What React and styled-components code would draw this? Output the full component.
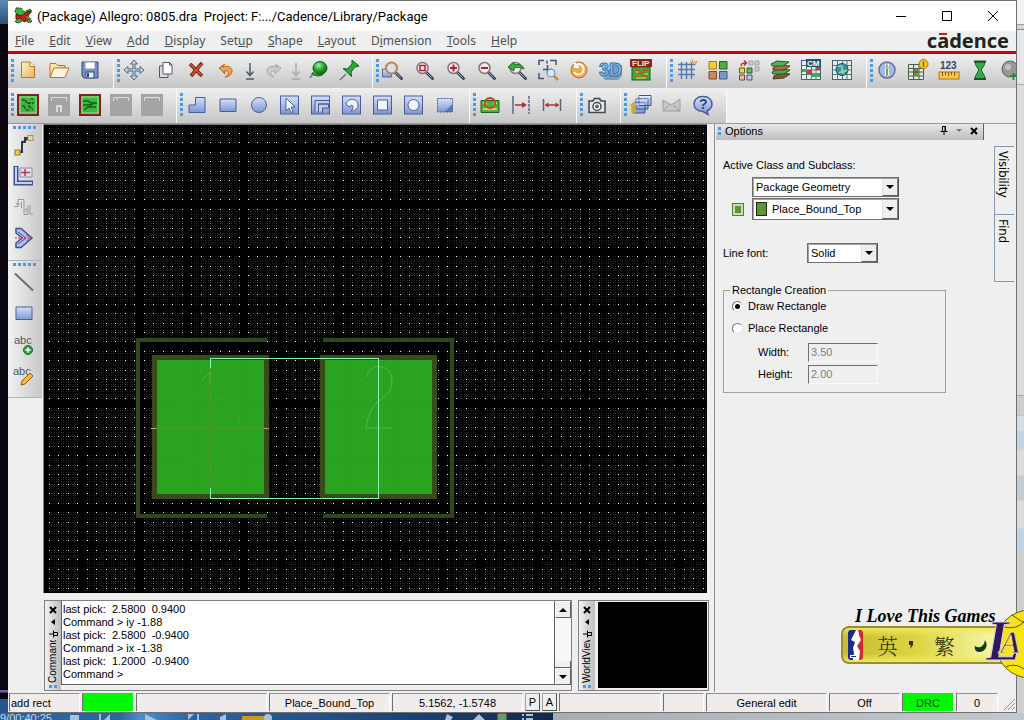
import { useState } from "react";
import styled, { createGlobalStyle } from "styled-components";

const GlobalStyle = createGlobalStyle`
    * {
        box-sizing: border-box;
    }
    body {
        margin: 0;
        font-family: "Liberation Sans", Arial, sans-serif;
        font-size: 11px;
        color: #000;
    }
    button, input, select {
        font: inherit;
        color: inherit;
    }
`;

const Desktop = styled.div`
    position: relative;
    display: grid;
    grid-template-columns: 8px 1fr 7px;
    grid-template-rows: 1fr 7px;
    height: 100vh;
    overflow: hidden;
    background: #0b0410;
`;

const LeftStrip = styled.div`
    background: linear-gradient(#5b8db8 0, #2c5078 24px, #0a0610 24px, #0a0610 690px, #6a5fae 690px, #6a5fae 692px, #0a0610 693px, #0a0610 699px, #27558f 699px);
`;

const RightStrip = styled.div`
    background: linear-gradient(#f2f2f2 0, #f2f2f2 24px, #9c9c9c 24px, #9c9c9c 25px, #d6d6d6 25px, #d6d6d6 29px, #888 29px, #888 30px, #e4e6ea 30px, #e4e6ea 84px, #aaa 84px, #aaa 85px, #dcdcdc 85px, #dcdcdc 395px, #aaa 395px, #aaa 396px, #cdcdcd 396px, #cdcdcd 415px, #aaa 415px, #d8dde2 416px, #d8dde2 430px, #c4d4e4 431px, #c4d4e4 450px, #dcdcdc 451px, #dcdcdc 475px, #c0ccd8 476px, #c0ccd8 500px, #dcdcdc 501px, #dcdcdc 528px, #c0d4e4 529px, #c0d4e4 553px, #d0d0d0 555px);
`;

const Player = styled.div`
    grid-column: 1 / -1;
    display: flex;
    align-items: flex-start;
    gap: 18px;
    overflow: hidden;
    line-height: 11px;
    color: #c8d8ea;
    background: linear-gradient(90deg, #2d64a0 0, #2d64a0 120px, #4a8ed0 140px, #2d64a0 190px, #1c4478 400px, #14284a 553px, #a8adb3 553px, #c3c8ce 100%);
`;

const Window = styled.div`
    display: flex;
    flex-direction: column;
    min-width: 0;
    min-height: 0;
    background: #efefef;
    border-top: 1px solid #707070;
    border-right: 1px solid #707070;
    border-bottom: 1px solid #707070;
`;

const TitleBar = styled.header`
    display: flex;
    align-items: center;
    height: 30px;
    padding-left: 6px;
    background: #fff;
`;

const TitleText = styled.h1`
    flex: 1;
    margin: 0 0 0 4px;
    font-family: Roboto, "Noto Sans", sans-serif;
    font-size: 13px;
    font-weight: 400;
    white-space: pre;
`;

const CaptionButton = styled.button`
    display: grid;
    place-items: center;
    width: 46px;
    height: 30px;
    padding: 0;
    border: none;
    background: none;
`;

const MenuRow = styled.div`
    display: flex;
    align-items: center;
    justify-content: space-between;
    height: 23px;
    padding: 0 7px 1px 0;
    border-bottom: 3px solid #c8040c;
`;

const MenuBar = styled.nav`
    display: flex;
    font-family: "Noto Sans", "Open Sans", sans-serif;
    font-size: 12px;
    color: #505050;
`;

const MenuButton = styled.button`
    padding: 0 8px 0 7px;
    border: none;
    background: none;
    line-height: 18px;
`;

const Brand = styled.div`
    position: relative;
    font-family: "Noto Sans", "Open Sans", sans-serif;
    font-size: 20px;
    font-weight: 700;
    line-height: 20px;
    color: #222;
    &::before {
        content: "";
        position: absolute;
        left: 12px;
        top: 2px;
        width: 8px;
        height: 2px;
        background: #d8141c;
    }
`;

const Toolbar = styled.div`
    display: flex;
    flex: none;
    align-self: ${(p) => (p.$fit ? "flex-start" : "stretch")};
    height: ${(p) => (p.$fit ? 35 : 34)}px;
    overflow: hidden;
    background: linear-gradient(#f0f0f0, #c6c6c6);
`;

const ToolGroup = styled.div`
    display: flex;
    flex: none;
    align-items: center;
    gap: 9px;
    padding: 0 ${(p) => p.$end || 12}px 2px 3px;
    border-right: 1px solid #fafafa;
`;

const Grip = styled.span`
    flex: none;
    width: 3px;
    height: 23px;
    margin-right: -6px;
    background: repeating-linear-gradient(#4c9ae6 0 3px, transparent 3px 5px);
`;

const ToolButton = styled.button`
    display: grid;
    place-items: center;
    flex: none;
    width: 22px;
    height: 22px;
    margin: 0 ${(p) => (p.$slim ? -8 : 0)}px;
    padding: 0;
    border: none;
    background: none;
    svg {
        display: block;
    }
`;

const Main = styled.div`
    display: flex;
    flex: 1;
    min-height: 0;
    border-top: 1px solid #9a9a9a;
`;

const SideTools = styled.div`
    display: flex;
    flex-direction: column;
    flex: none;
    width: 34px;
`;

const SideGroup = styled.div`
    display: flex;
    flex-direction: column;
    align-items: center;
    gap: 9px;
    padding: 2px 2px 11px 0;
    border-bottom: 1px solid #aeb4bc;
    background: linear-gradient(90deg, #f2f2f2, #c8c8c8);
`;

const SideGrip = styled.span`
    width: 23px;
    height: 3px;
    margin-bottom: -4px;
    background: repeating-linear-gradient(90deg, #4c9ae6 0 3px, transparent 3px 5px);
`;

const Center = styled.div`
    display: flex;
    flex-direction: column;
    flex: 1;
    gap: 7px;
    min-width: 0;
    padding: 0 5px 1px 1px;
`;

const DesignCanvas = styled.div`
    flex: 1;
    min-height: 0;
    margin-right: 2px;
    overflow: hidden;
    border-left: 1px solid #808080;
    border-top: 1px solid #808080;
    background: #000;
    svg {
        display: block;
        width: 100%;
        height: 100%;
    }
`;

const BottomDocks = styled.div`
    display: flex;
    flex: none;
    gap: 6px;
    height: 91px;
    padding-left: 1px;
`;

const Dock = styled.section`
    display: flex;
    flex: ${(p) => (p.$grow ? "1" : "none")};
    width: ${(p) => (p.$grow ? "auto" : "131px")};
    min-width: 0;
    border: 1px solid #808080;
`;

const DockBar = styled.div`
    display: flex;
    flex-direction: column;
    align-items: center;
    flex: none;
    width: 16px;
    padding-top: 3px;
    background: linear-gradient(90deg, #f2f2f2, #bdbdbd);
`;

const DockTitle = styled.h2`
    flex: 1;
    min-height: 0;
    margin: 0;
    overflow: hidden;
    writing-mode: vertical-rl;
    transform: rotate(180deg);
    font-size: 10px;
    font-weight: 400;
    line-height: 12px;
`;

const DockGrip = styled.span`
    flex: none;
    width: 8px;
    height: 3px;
    margin: 2px 0;
    background: repeating-linear-gradient(90deg, #4c9ae6 0 3px, transparent 3px 5px);
`;

const CommandLog = styled.div`
    flex: 1;
    margin-bottom: 5px;
    padding: 2px 1px;
    border-left: 1px solid #606060;
    border-bottom: 1px solid #606060;
    background: #fff;
    line-height: 13px;
    white-space: pre;
`;

const Scrollbar = styled.div`
    display: flex;
    flex-direction: column;
    justify-content: space-between;
    flex: none;
    width: 17px;
    margin-bottom: 5px;
    border-left: 1px solid #606060;
    background: #f8f8f8;
`;

const ScrollButton = styled.button`
    display: grid;
    place-items: center;
    height: 17px;
    padding: 0;
    border: 1px solid #fff;
    border-right-color: #606060;
    border-bottom-color: #606060;
    background: #efefef;
`;

const ScrollThumb = styled.div`
    height: 7px;
    margin-top: auto;
    border-right: 1px solid #606060;
    border-bottom: 1px solid #606060;
    background: #efefef;
`;

const WorldView = styled.div`
    flex: 1;
    margin: 1px 1px 2px 3px;
    background: #000;
`;

const OptionsPane = styled.aside`
    display: flex;
    flex: none;
    width: 302px;
    border-left: 1px solid #909090;
`;

const OptionsColumn = styled.div`
    flex: none;
    width: 269px;
    padding-left: 1px;
`;

const OptionsHeader = styled.div`
    display: flex;
    align-items: center;
    gap: 4px;
    height: 16px;
    padding: 0 4px 3px 2px;
    border-right: 1px solid #606060;
    background: linear-gradient(#e8e8e8, #bcbcbc);
    h2 {
        flex: 1;
        margin: 0;
        font-size: 11px;
        font-weight: 400;
    }
`;

const HeaderGrip = styled.span`
    width: 3px;
    height: 8px;
    background: repeating-linear-gradient(#4c9ae6 0 3px, transparent 3px 5px);
`;

const TinyButton = styled.button`
    display: grid;
    place-items: center;
    width: 11px;
    height: 12px;
    padding: 0;
    border: none;
    background: none;
`;

const OptionsForm = styled.form`
    padding: 18px 0 0 7px;
`;

const ClassGrid = styled.div`
    display: grid;
    grid-template-columns: 29px 147px;
    gap: 1px 0;
    align-items: center;
    justify-items: center;
    margin-bottom: 23px;
`;

const WideLabel = styled.label`
    grid-column: 1 / -1;
    justify-self: start;
    line-height: 14px;
    margin-bottom: 4px;
`;

const LayerToggle = styled.button`
    grid-column: 1;
    width: 12px;
    height: 13px;
    padding: 0;
    border: 1px solid #4f7f2f;
    background: #5e9434;
    box-shadow: inset 0 0 0 2px #c9dcba;
`;

const SelectFrame = styled.div`
    position: relative;
    display: flex;
    align-items: center;
    grid-column: 2;
    width: ${(p) => p.$width || 147}px;
    height: ${(p) => (p.$tall ? 22 : 20)}px;
    padding-left: ${(p) => (p.$tall ? 3 : 0)}px;
    border: 1px solid #707070;
    border-right-color: #505050;
    background: #fff;
    box-shadow: inset 1px 1px 0 #a0a0a0;
`;

const Select = styled.select`
    flex: 1;
    min-width: 0;
    height: 100%;
    padding: 0 18px 0 3px;
    border: none;
    outline: none;
    appearance: none;
    background: none;
`;

const SelectArrow = styled.span`
    position: absolute;
    right: 0;
    top: 1px;
    bottom: 0;
    display: grid;
    place-items: center;
    width: 16px;
    border-right: 1px solid #808080;
    border-bottom: 1px solid #606060;
    border-left: 1px solid #e0e0e0;
    background: #efefef;
    pointer-events: none;
`;

const Swatch = styled.span`
    width: 11px;
    height: 14px;
    margin-right: 2px;
    border: 1px solid #1c2c10;
    background: #5e9434;
`;

const LineFontRow = styled.div`
    display: flex;
    align-items: center;
    margin-bottom: 20px;
    label {
        width: 84px;
    }
`;

const RectangleSet = styled.fieldset`
    display: flex;
    flex-direction: column;
    width: 223px;
    height: 110px;
    margin: 0;
    padding: 0 0 0 8px;
    border: 1px solid #a0a0a0;
    legend {
        margin-left: -2px;
        padding: 0 2px;
        line-height: 14px;
    }
`;

const RadioLabel = styled.label`
    display: flex;
    align-items: center;
    gap: 5px;
    height: 18px;
    margin-bottom: 4px;
`;

const Radio = styled.input`
    appearance: none;
    width: 11px;
    height: 11px;
    margin: 0;
    border: 1px solid #707070;
    border-right-color: #e4e4e4;
    border-bottom-color: #e4e4e4;
    border-radius: 50%;
    background: #fff;
    &:checked {
        background: radial-gradient(#000 0 2px, #fff 3px);
    }
`;

const SizeRow = styled.div`
    display: flex;
    align-items: center;
    height: 22px;
    padding-left: 26px;
    label {
        width: 50px;
    }
`;

const SizeInput = styled.input`
    width: 70px;
    height: 19px;
    padding: 0 0 0 2px;
    border: 1px solid #fafafa;
    border-top-color: #707070;
    border-left-color: #707070;
    background: #efefef;
    &:disabled {
        color: #808080;
    }
`;

const DockTabs = styled.div`
    display: flex;
    flex-direction: column;
    flex: 1;
    margin: 22px 2px 0 10px;
`;

const DockTab = styled.button`
    width: 20px;
    height: 68px;
    padding: 4px 3px 0 0;
    border: none;
    border-top: 1px solid #8898a8;
    border-left: 1px solid #8898a8;
    background: #efefef;
    writing-mode: vertical-rl;
    text-align: left;
    font-family: "Noto Sans", "Open Sans", sans-serif;
    font-size: 12px;
    line-height: 16px;
    &:last-child {
        border-bottom: 1px solid #8898a8;
    }
`;

const StatusBar = styled.footer`
    display: flex;
    flex: none;
    gap: 2px;
    height: 20px;
    padding: 1px 0 1px 1px;
`;

const StatusCell = styled.div`
    flex: ${(p) => (p.$width ? `0 0 ${p.$width}px` : "1")};
    border-left: 1px solid #707070;
    border-top: 1px solid #909090;
    border-right: 1px solid #fff;
    padding: 0 1px;
    line-height: 18px;
    text-align: ${(p) => (p.$left ? "left" : "center")};
    color: ${(p) => (p.$on ? "#0a4a0a" : "#000")};
    background: ${(p) => (p.$on ? "#00f800" : "#f0eceb")};
`;

const StatusButton = styled.button`
    flex: 0 0 15px;
    padding: 0;
    border: 1px solid #505050;
    border-top-color: #a0a0a0;
    border-left-color: #a0a0a0;
    background: #efefef;
`;

const ImeWidget = styled.div`
    position: absolute;
    right: 0;
    bottom: 42px;
    width: 183px;
    height: 71px;
    overflow: hidden;
`;

const ImeSlogan = styled.div`
    padding-left: 14px;
    font-family: "Liberation Serif", serif;
    font-size: 18px;
    font-style: italic;
    font-weight: 700;
    line-height: 19px;
    white-space: nowrap;
`;

const ImeBar = styled.div`
    display: flex;
    align-items: center;
    height: 38px;
    padding-left: 5px;
    border: 2px solid #98902c;
    border-right: none;
    border-radius: 8px 0 0 8px;
    background: linear-gradient(#f0e860 0, transparent 25%, transparent 75%, #f0e860), linear-gradient(90deg, #c8bc34, #dcd440 40%, #f4f4a0 80%);
    font-family: "Noto Serif CJK TC", "Noto Sans CJK TC", sans-serif;
    font-size: 21px;
    font-weight: 300;
    line-height: 30px;
    color: #2c3008;
`;

const ImeKey = styled.span`
    margin-left: ${(p) => p.$gap}px;
`;

const ImeBall = styled.svg`
    position: absolute;
    right: 0;
    top: 0;
`;

const Svg = ({ children }) => (
    <svg width="22" height="22" viewBox="0 0 22 22" fill="none" stroke="#44546c" strokeWidth="1">
        {children}
    </svg>
);

const Gradients = () => (
    <svg width="0" height="0" style={{ position: "absolute" }} aria-hidden="true">
        <defs>
            <linearGradient id="blue" x1="0" y1="0" x2="0" y2="1">
                <stop offset="0" stopColor="#d4e0fa" />
                <stop offset="1" stopColor="#7d97d4" />
            </linearGradient>
            <linearGradient id="tan" x1="0" y1="0" x2="1" y2="1">
                <stop offset="0" stopColor="#fff0cc" />
                <stop offset="1" stopColor="#e8b660" />
            </linearGradient>
            <radialGradient id="ball" cx="0.4" cy="0.3" r="0.7">
                <stop offset="0" stopColor="#a0f0a0" />
                <stop offset="0.5" stopColor="#28a838" />
                <stop offset="1" stopColor="#086018" />
            </radialGradient>
        </defs>
    </svg>
);

const Lens = ({ children, back }) => (
    <Svg>
        {back}
        <path d="M13.500 13.500l6 6" stroke="#3c4668" strokeWidth="3" strokeLinecap="round" />
        <path d="M13.500 13.500l5 5" stroke="#98a4c8" />
        <circle cx="9.500" cy="9" r="5.500" fill="#f6ecec" stroke="#8c7078" strokeWidth="1.500" />
        {children}
    </Svg>
);

const DownArrow = ({ color }) => (
    <Svg>
        <path d="M11 4v12M7.500 12.500l3.500 4 3.500-4M7 20h8" stroke={color} strokeWidth="1.500" />
    </Svg>
);

const Board = ({ children }) => (
    <Svg>
        <rect x="1" y="1" width="20" height="20" fill="#3cb83c" stroke="#7c2428" strokeWidth="2" />
        <rect x="3" y="3" width="16" height="16" stroke="#b8d0a0" />
        {children}
    </Svg>
);

const GrayBoard = ({ children }) => (
    <Svg>
        <rect x="0" y="0" width="22" height="22" fill="#a4a4a4" stroke="none" />
        <path d="M3.500 7v-3.500h15v3.500" stroke="#dedede" />
        {children}
    </Svg>
);

const Tile = ({ children }) => (
    <Svg>
        <rect x="1.500" y="2" width="18" height="18" fill="url(#blue)" stroke="#4c5c94" />
        {children}
    </Svg>
);

const Table = ({ children }) => (
    <Svg>
        <rect x="1.500" y="1.500" width="19" height="19" fill="#e8ecec" stroke="#486070" />
        <path d="M1.500 6.500h19M1.500 11h19M1.500 15.500h19M6.500 1.500v19M11.500 1.500v19M16 1.500v19" stroke="#587080" />
        {children}
    </Svg>
);

const icons = {
    new: (
        <Svg>
            <path d="M4.500 3h8.500l4.500 4v11.500h-13z" fill="url(#tan)" stroke="#b07c2c" />
            <path d="M13 3v4.500h4.500" fill="#fff" stroke="#b07c2c" />
        </Svg>
    ),
    open: (
        <Svg>
            <path d="M2 18V4.500h6l2 2h7V9" fill="url(#tan)" stroke="#b47820" />
            <path d="M2 18.500L6 9h15l-4 9.500z" fill="#fff4e0" stroke="#b47820" />
        </Svg>
    ),
    save: (
        <Svg>
            <path d="M3 3h16v16H5l-2-2z" fill="#7890c0" stroke="#34487c" />
            <path d="M6 3h10v7H6z" fill="#fff" stroke="#8898b8" />
            <path d="M7 13h8v6H7z" fill="#e4ecf8" stroke="#34487c" />
            <path d="M8 14h2v4H8z" fill="#34487c" stroke="none" />
        </Svg>
    ),
    move: (
        <Svg>
            <path d="M11 3v16M3 11h16" stroke="#4c6480" strokeWidth="3" />
            <path d="M11 1L7.500 5h7zM11 21l-3.500-4h7zM1 11l4-3.500v7zM21 11l-4-3.500v7z" fill="#c8dcec" stroke="#4c6480" />
            <path d="M11 4v14M4 11h14" stroke="#d4e4f0" strokeWidth="1" />
        </Svg>
    ),
    copy: (
        <Svg>
            <path d="M5.500 7h8.500v11.500H5.500z" fill="#d8dcdf" stroke="#505860" />
            <path d="M9 3.500h6.500l2.500 2.500v9H9z" fill="#fff" stroke="#505860" />
            <path d="M15.500 3.500V6H18" stroke="#505860" />
        </Svg>
    ),
    remove: (
        <Svg>
            <path d="M5 5l12 12M17 4L6 17" stroke="#702010" strokeWidth="3.500" />
            <path d="M5.500 5.500l11 11M16.500 5L6.500 16.500" stroke="#e0582c" strokeWidth="1.500" />
        </Svg>
    ),
    undo: (
        <Svg>
            <path d="M6 8c6-2 10 0 10 4s-4 6-7 6c4-2 6-7-1-6l1 3-6-6 6-4z" fill="#f0a050" stroke="#b86420" />
        </Svg>
    ),
    down: <DownArrow color="#4c5c6c" />,
    redo: (
        <Svg>
            <path d="M16 8C10 6 5 8 5 12s4 6 7 6c-4-2-5-7 1-6v3l6-6-6-4z" fill="#ccc" stroke="#a8a8a8" />
        </Svg>
    ),
    downOff: <DownArrow color="#acacac" />,
    tack: (
        <Svg>
            <path d="M6 13l-4 6" stroke="#888" strokeWidth="2" />
            <ellipse cx="12" cy="9" rx="7" ry="6.500" fill="url(#ball)" stroke="#105c1c" />
            <path d="M4 14c3 3 8 3 11 1" stroke="#187828" strokeWidth="2" />
        </Svg>
    ),
    pushpin: (
        <Svg>
            <path d="M7 15l-6 6" stroke="#707070" strokeWidth="1.500" />
            <path d="M13 1l7 6-4 1-4 5 .5 4.500-8.500-8 4.500 .5L13 5z" fill="#30a840" stroke="#106020" />
        </Svg>
    ),
    zoomWindow: (
        <Lens back={<path d="M0.500 10h9v8h-9z" fill="url(#blue)" stroke="#4c64a0" />}>
            <circle cx="9.500" cy="9" r="5.500" fill="#d8e0ec" stroke="#c08850" strokeWidth="2" />
        </Lens>
    ),
    zoomFit: <Lens><path d="M7 6.500h5v5H7z" stroke="#b01c30" strokeWidth="1.500" /></Lens>,
    zoomIn: <Lens><path d="M6 9h7M9.500 5.500v7" stroke="#b01c30" strokeWidth="2" /></Lens>,
    zoomOut: <Lens><path d="M6 9h7" stroke="#b01c30" strokeWidth="2" /></Lens>,
    zoomBack: <Lens><path d="M2 8l6-5v3c6-2 9 1 10 4-3-2-6-2-10-1v3z" fill="#38b048" stroke="#107028" /></Lens>,
    zoomArea: (
        <Svg>
            <path d="M2 6V1.500h5M13 1.500h6V6M2 14v5.500h5M10 1.500v3M6 10.500h9M10.500 6v9" stroke="#405874" strokeWidth="1.500" />
            <circle cx="14" cy="14" r="4" fill="#d0ecfa" stroke="#6890b0" />
            <path d="M17 17l4 4" stroke="#d48830" strokeWidth="2.500" />
        </Svg>
    ),
    redraw: (
        <Svg>
            <circle cx="11" cy="11" r="8" fill="#f8a848" stroke="#b87030" />
            <path d="M7 7c4-4 9-1 8.500 4s-7 6-9.500 2M7 4v4h4" stroke="#fff" strokeWidth="2" />
        </Svg>
    ),
    view3d: (
        <svg width="24" height="22" viewBox="0 0 24 22">
            <path d="M2 15l4 6h13l4-4V7l-3-3z" fill="#7c9cc0" />
            <text x="0" y="17" fontFamily="Liberation Sans" fontSize="18" fontWeight="700" fill="#90c4f0" stroke="#3870a8">3D</text>
        </svg>
    ),
    flip: (
        <Svg>
            <rect x="2" y="8" width="18" height="13" fill="#3cac34" stroke="#185c1c" />
            <path d="M5 11h4v3h5v-3h4M5 18h4M12 17h5" stroke="#e04030" strokeWidth="1.500" />
            <path d="M6 19h10M6 13h3M14 15h4" stroke="#f0d858" />
            <rect x="0" y="0" width="22" height="8" fill="#882418" stroke="none" />
            <text x="2" y="7" fontFamily="Liberation Sans" fontSize="8" fontWeight="700" fill="#ffe8c0" stroke="none">FLIP</text>
        </Svg>
    ),
    grid: (
        <Svg>
            <path d="M2 5.500h17M2 10.500h17M2 15.500h17M5.500 3v17M10.500 3v17M15.500 3v17" stroke="#5878b0" strokeWidth="1.500" />
            <path d="M16 0l1 4 4-2-2 4M14 2l3 3" stroke="#e8902c" />
        </Svg>
    ),
    tiles: (
        <Svg>
            <path d="M2 2.500h7.500v7.500H2z" fill="#f4cc38" stroke="#a07c10" />
            <path d="M12.500 2.500H20v7.500h-7.500z" fill="#58a848" stroke="#286420" />
            <path d="M2 12.500h7.500V20H2z" fill="#c88868" stroke="#84482c" />
            <path d="M12.500 12.500H20V20h-7.500z" fill="#7898c8" stroke="#3c5888" />
        </Svg>
    ),
    tilesAdd: (
        <Svg>
            <path d="M11 2h4v4h-4zM17 2h4v4h-4zM17 8h4v4h-4z" fill="#ccc" stroke="#a0a0a0" />
            <path d="M1.500 9h5v5h-5z" fill="#e8d850" stroke="#586018" />
            <path d="M9 9h5v5H9z" fill="#68b858" stroke="#286420" />
            <path d="M1.500 16h5v5h-5z" fill="#e8c0b0" stroke="#84383c" />
            <path d="M9 16h5v5H9z" fill="#b8c8e8" stroke="#3c5888" />
            <path d="M3 7c0-3 2-3 5-3M6 1.500L8.500 4 6 6.500" stroke="#c03038" strokeWidth="1.500" />
        </Svg>
    ),
    layers: (
        <Svg>
            <path d="M5 17l6-3 10 1-6 4-11 1z" fill="#7c5838" stroke="#503820" />
            <path d="M3 13l6-3 12 1-6 4H4z" fill="#50a848" stroke="#285c24" />
            <path d="M4 9l6-3 11 1-6 4H4z" fill="#a87048" stroke="#583420" />
            <path d="M2 5l6-3 12 1-6 4H3z" fill="#58b050" stroke="#285c24" />
        </Svg>
    ),
    cm: (
        <Table>
            <path d="M2 10h5v3H2zM12 14h8v4h-8z" fill="#40a850" stroke="none" />
            <path d="M7 11h4v4H7zM16 8h4v3h-4z" fill="#d03830" stroke="none" />
            <rect x="6" y="0" width="15" height="8" fill="#205870" stroke="none" />
            <text x="7" y="7" fontFamily="Liberation Sans" fontSize="8" fontWeight="700" fill="#fff" stroke="none">CM</text>
        </Table>
    ),
    globe: (
        <Table>
            <circle cx="11" cy="10.500" r="6" fill="#3890a0" stroke="#185060" />
            <path d="M7 8c3-3 5 0 4 2s3 3 5 1M8 14c2-2 4-1 5 1" stroke="#a0e0a0" strokeWidth="1.500" />
        </Table>
    ),
    info: (
        <Svg>
            <circle cx="11" cy="11" r="8" fill="#a8b8e4" stroke="#60709c" strokeWidth="1.500" />
            <path d="M11 9.500v7M11 5v2.500" stroke="#fff" strokeWidth="4" />
            <path d="M11 9.500v7M11 5.500v2" stroke="#68a840" strokeWidth="2" />
        </Svg>
    ),
    report: (
        <Svg>
            <path d="M1.500 5.500h15v15h-15zM1.500 9.500h15M1.500 13h15M1.500 17h15M6.500 5.500v15M12 5.500v15" fill="#e4e8d8" stroke="#486050" />
            <path d="M7 10h4.500v7H7z" fill="#48a848" stroke="none" />
            <path d="M7 12h4v2H7z" fill="#d03030" stroke="none" />
            <circle cx="16.500" cy="5" r="4.500" fill="#f8c828" stroke="#a07408" />
            <path d="M16.500 2.500v5" stroke="#7c4c08" strokeWidth="1.500" />
        </Svg>
    ),
    ruler: (
        <Svg>
            <text x="2" y="10" fontFamily="Liberation Sans" fontSize="10" fontWeight="700" fill="#304868" stroke="none">123</text>
            <rect x="1" y="13" width="20" height="7" fill="#f8c850" stroke="#b07410" />
            <path d="M4.500 13v4M7.500 13v3M10.500 13v4M13.500 13v3M16.500 13v4" stroke="#8c5808" />
        </Svg>
    ),
    hourglass: (
        <Svg>
            <path d="M6 3h10c0 4-3.500 6-3.500 8s3.500 5 3.500 8.500H6c0-3.500 3.500-6.500 3.500-8.500S6 7 6 3z" fill="#38a848" stroke="#105c20" />
            <path d="M5 2.500h12M5 20h12" stroke="#105c20" strokeWidth="2" />
        </Svg>
    ),
    gray: (
        <Svg>
            <circle cx="10" cy="10" r="8" fill="#989898" stroke="#606060" />
            <circle cx="8" cy="8" r="3" fill="#c4c4c4" stroke="none" />
            <path d="M10 17h7M13.500 14v7" stroke="#289038" strokeWidth="2" />
        </Svg>
    ),
    boardA: <Board><path d="M5 6h4v3h3v4M14 5h2M5 12h3v3M12 12l4 4M11 9h6M9 16h3" stroke="#145c18" strokeWidth="1.500" strokeDasharray="3 1" /></Board>,
    grayA: <GrayBoard><path d="M9 18v-6h4v6" stroke="#eee" strokeWidth="1.500" /></GrayBoard>,
    boardB: <Board><path d="M4 7h5l3 2h6M4 11h8l3-2M5 16l4-3h8" stroke="#145c18" strokeWidth="1.500" /></Board>,
    grayB: <GrayBoard><path d="M5 3l3 3" stroke="#dedede" /></GrayBoard>,
    grayC: <GrayBoard />,
    polygon: <Svg><path d="M9.500 3.500H19v15H3v-7.500h6.500z" fill="url(#blue)" stroke="#4c5c94" /></Svg>,
    rect: <Svg><path d="M3 5h16v12.500H3z" fill="url(#blue)" stroke="#4c5c94" /></Svg>,
    circle: <Svg><circle cx="11" cy="11" r="7.500" fill="url(#blue)" stroke="#4c5c94" /></Svg>,
    select: <Tile><path d="M7 4v13l3-3 2 4.500 2-1-2-4.500h4z" fill="#fff" stroke="#4c5c94" /></Tile>,
    nested: <Tile><path d="M5 19V6.500h14M8.500 19v-9H19M8.500 10h10v4h-6v5.500" fill="#c0ccec" stroke="#4c5c94" /></Tile>,
    arcCut: <Tile><path d="M5 10c1-6 12-7 12 1 0 4-4 6-7 6 2-2 3-4 1-6L8 13z" fill="#f4f6fc" stroke="#4c5c94" /></Tile>,
    rectCut: <Tile><path d="M5.500 6h10v10h-10z" fill="#f4f6fc" stroke="#4c5c94" /></Tile>,
    circleCut: <Tile><circle cx="10.500" cy="11" r="5.500" fill="#f4f6fc" stroke="#4c5c94" /></Tile>,
    island: (
        <Svg>
            <path d="M3.500 5h15v8l-5 5h-10z" fill="url(#blue)" stroke="none" />
            <path d="M18.500 10v8h-8z" fill="#5874b8" stroke="none" />
            <path d="M3.500 4.500h15v13.500h-15z" stroke="#4c5c94" strokeDasharray="2 1" />
        </Svg>
    ),
    boardRing: (
        <Svg>
            <path d="M2 6.500h18v12H2z" fill="#48b040" stroke="#186420" />
            <path d="M4 9h3v3M18 9h-3v4M4 15h14" stroke="#f0e060" strokeWidth="1.500" />
            <circle cx="11" cy="9" r="5" stroke="#d03c28" strokeWidth="2" />
        </Svg>
    ),
    toEdge: (
        <Svg>
            <path d="M3 2v18" stroke="#586878" strokeWidth="1.500" />
            <path d="M19 2v18" stroke="#586878" strokeWidth="1.500" strokeDasharray="3 1" />
            <path d="M5 11h9" stroke="#b03038" strokeWidth="1.500" />
            <path d="M12 8l5 3-5 3z" fill="#b03038" stroke="none" />
        </Svg>
    ),
    between: (
        <Svg>
            <path d="M2.500 5v12M19.500 5v12" stroke="#586878" strokeWidth="1.500" />
            <path d="M6 11h10" stroke="#b03038" strokeWidth="1.500" />
            <path d="M3.500 11l4-2.500v5zM18.500 11l-4-2.500v5z" fill="#b03038" stroke="none" />
        </Svg>
    ),
    camera: (
        <Svg>
            <path d="M3 7h4l1.500-2.500h5L15 7h4v11.500H3z" fill="#e4e6ea" stroke="#404850" strokeWidth="1.500" />
            <circle cx="11" cy="12.500" r="4" fill="#fff" stroke="#404850" strokeWidth="1.500" />
            <circle cx="11" cy="12.500" r="1.500" fill="#607090" />
        </Svg>
    ),
    windows: (
        <Svg>
            <path d="M9 1.500h12v10H9zM6 5h12v10H6zM3 9h12v10H3z" fill="url(#blue)" stroke="#3c5490" />
            <path d="M9 2.500h12M6 6h12M3 10h12" stroke="#e8f0ff" />
            <path d="M0 11h5v1.500H2v2h3v1.500H2v2h4" stroke="#d4b020" strokeWidth="1.500" />
        </Svg>
    ),
    mail: (
        <Svg>
            <path d="M2 6l8 5 9-6v12H2zM2 17l6-6M19 17l-7-6" fill="#c8c8c8" stroke="#9c9c9c" />
        </Svg>
    ),
    help: (
        <Svg>
            <path d="M11 2.500c6 0 9 3.500 9 7.500s-3 6-5 7l1 3.500-5-3C5 17.500 2 14 2 10s3-7.500 9-7.500z" fill="url(#blue)" stroke="#4c5c94" strokeWidth="1.500" />
            <text x="7" y="15" fontFamily="Liberation Sans" fontSize="14" fontWeight="700" fill="#304478" stroke="none">?</text>
        </Svg>
    ),
    connect: (
        <Svg>
            <path d="M4 18h5V8h3V4h5" stroke="#303848" strokeWidth="2" />
            <path d="M11 7l5-3" stroke="#303848" strokeWidth="2" />
            <rect x="2" y="16" width="5" height="5" fill="#e8d050" stroke="#8c7c20" />
            <rect x="15" y="1.500" width="5" height="5" fill="#e8d898" stroke="#9c9468" />
        </Svg>
    ),
    slide: (
        <Svg>
            <path d="M3 1v17h17" stroke="#3c5490" strokeWidth="5" />
            <path d="M3 2v16h16" stroke="#c4d0f0" strokeWidth="2" />
            <path d="M7 3h12v9H7z" fill="#dce2ec" stroke="#8090a8" />
            <path d="M8 7.500h9M12 4v7" stroke="#d03040" strokeWidth="1.500" />
        </Svg>
    ),
    delay: (
        <Svg>
            <path d="M1 10.500h4V3.500h6V18.500h4V9.500M8.500 6v6M13 12v4M17 9v9h3M3 8h4" stroke="#9a9a9a" />
        </Svg>
    ),
    vertex: (
        <Svg>
            <path d="M3 1.500h5l11 9.500-11 9.500H3v-4.500l6-5-6-5z" fill="#b0c0e8" stroke="#3c5490" strokeWidth="1.500" />
            <path d="M5 5l8 6-8 6" stroke="#3c5490" />
            <path d="M2 11h15M13 8l5 3-5 3M5 8l5 3-5 3" stroke="#c83848" strokeDasharray="2 1" />
        </Svg>
    ),
    line: <Svg><path d="M2 2.500l18 17" stroke="#68727c" strokeWidth="2" /></Svg>,
    fillRect: <Svg><path d="M3 5h16v12.500H3z" fill="url(#blue)" stroke="#4c5c94" /></Svg>,
    textAdd: (
        <Svg>
            <text x="1" y="11" fontFamily="Liberation Sans" fontSize="11" fill="#505860" stroke="none">abc</text>
            <circle cx="15" cy="17" r="4.500" fill="#38a040" stroke="#187024" />
            <path d="M12.500 17h5M15 14.500v5" stroke="#fff" strokeWidth="1.500" />
        </Svg>
    ),
    textEdit: (
        <Svg>
            <text x="0" y="11" fontFamily="Liberation Sans" fontSize="11" fill="#505860" stroke="none">abc</text>
            <path d="M8 21l1-4 8-8 3 3-8 8z" fill="#f8b840" stroke="#985c14" />
        </Svg>
    ),
};

const topGroups = [
    { end: 12, items: ["new", "open", "save"] },
    { end: 11, items: ["move", "copy", "remove", "undo", "down", "redo", "downOff", "tack", "pushpin"] },
    { end: 14, items: ["zoomWindow", "zoomFit", "zoomIn", "zoomOut", "zoomBack", "zoomArea", "redraw", "view3d", "flip"] },
    { end: 13, items: ["grid", "tiles", "tilesAdd", "layers", "cm", "globe"] },
    { end: 12, items: ["info", "report", "ruler", "hourglass", "gray"] },
];

const shapeGroups = [
    { end: 13, items: ["boardA", "grayA", "boardB", "grayB", "grayC"] },
    { end: 13, items: ["polygon", "rect", "circle", "select", "nested", "arcCut", "rectCut", "circleCut", "island"] },
    { end: 13, items: ["boardRing", "toEdge", "between"] },
    { end: 12, items: ["camera"] },
    { end: 12, items: ["windows", "mail", "help"] },
];

const sideGroups = [
    ["connect", "slide", "delay", "vertex"],
    ["line", "fillRect", "textAdd", "textEdit"],
];

// label and the index of its mnemonic letter
const menus = [
    ["File", 0], ["Edit", 0], ["View", 0], ["Add", 0], ["Display", 0], ["Setup", 3],
    ["Shape", 0], ["Layout", 0], ["Dimension", 1], ["Tools", 0], ["Help", 0],
];

const ToolGroups = ({ groups }) =>
    groups.map((group) => (
        <ToolGroup key={group.items[0]} $end={group.end}>
            <Grip />
            {group.items.map((name) => (
                <ToolButton key={name} aria-label={name} $slim={name.startsWith("down")}>
                    {icons[name]}
                </ToolButton>
            ))}
        </ToolGroup>
    ));

// 21 grid steps fit in one 199px tile
const TILE = 199;
const STEPS = 21;
const at = (n) => Math.round((n * TILE) / STEPS);

const gridPath = () => {
    const gapsX = [3, 9, 14, 20];
    const gapsY = [1, 7, 12, 18];
    let major = "";
    let minor = "";
    for (let i = 0; i < STEPS; i++) {
        for (let j = 0; j < STEPS; j++) {
            major += `M${at(i)} ${at(j)}h1v1h-1z`;
            for (let a = 0; a < 4; a++) {
                for (let b = 0; b < 4; b++) {
                    if (a + b === 0) continue;
                    if (a && gapsX.includes(i)) continue;
                    if (b && gapsY.includes(j)) continue;
                    minor += `M${at(i + a / 4)} ${at(j + b / 4)}h1v1h-1z`;
                }
            }
        }
    }
    return { major, minor };
};

const dots = gridPath();

const Layout = () => (
    <svg shapeRendering="crispEdges" role="img" aria-label="0805 package">
        <defs>
            <pattern id="dots" x="5" y="8" width={TILE} height={TILE} patternUnits="userSpaceOnUse">
                <path d={dots.minor} fill="#242424" />
                <path d={dots.major} fill="#fff" />
            </pattern>
            <pattern id="padDots" x="5" y="8" width={TILE} height={TILE} patternUnits="userSpaceOnUse">
                <path d={dots.major} fill="#4cb43c" />
            </pattern>
        </defs>
        <rect width="100%" height="100%" fill="url(#dots)" />
        <g fill="none" stroke="#32461c" strokeWidth="4">
            <path d="M223 215H94v176h129M279 215h129v176H279" />
        </g>
        <g fill="#2aa420" stroke="#3a4a1c" strokeWidth="5">
            <path d="M110.500 232.500h112v139h-112zM278.500 232.500h112v139h-112z" />
        </g>
        <path d="M113 235h107v134H113zM281 235h107v134H281z" fill="url(#padDots)" />
        <g fill="none" stroke="#4c9c24" shapeRendering="auto">
            <path d="M166.500 243v120M107 303.500h118" />
            <path d="M135 318c-3-50 15-46 32-46s30 6 31 46M142 330c10 12 40 12 50 0" strokeDasharray="4 2" />
            <path d="M158 255l8-8v12" stroke="#48b440" />
        </g>
        <path d="M322 252c5-17 27-12 26 5-1 15-13 16-19 25-4 7-6 13-7 21h26" fill="none" stroke="#50bc48" shapeRendering="auto" />
        <path d="M166.500 243v-9.500h168v140h-168V363" fill="none" stroke="#88f4ac" />
        <path d="M107 303.500h5M220 303.500h5" stroke="#a0a888" />
    </svg>
);

const Cross = () => (
    <svg width="8" height="8" viewBox="0 0 8 8" stroke="#000" strokeWidth="2"><path d="M1 1l6 6M7 1L1 7" /></svg>
);

const Pin = () => (
    <svg width="8" height="9" viewBox="0 0 8 9" fill="none" stroke="#000"><path d="M2.500 5V.5h3V5M5 .5V5M.5 5.500h7M4 6v3" /></svg>
);

const Triangle = ({ up, color = "#000" }) => (
    <svg width="8" height="4" viewBox="0 0 8 4" fill={color}><path d={up ? "M0 4h8L4 0z" : "M0 0h8L4 4z"} /></svg>
);

const DockHandle = ({ title }) => (
    <DockBar>
        <TinyButton aria-label={`Close ${title}`}><Cross /></TinyButton>
        <TinyButton aria-label={`Collapse ${title}`}>
            <svg width="4" height="6"><path d="M4 0v6L0 3z" /></svg>
        </TinyButton>
        <TinyButton aria-label={`Pin ${title}`}>
            <svg width="9" height="8" viewBox="0 0 9 8" fill="none" stroke="#000"><path d="M5 2.500h3.500v3H5M4.500.5v7M0 4h4" /></svg>
        </TinyButton>
        <DockTitle>{title}</DockTitle>
        <DockGrip />
    </DockBar>
);

const OptionsPanel = () => {
    const [mode, setMode] = useState("draw");

    return (
        <OptionsPane>
            <OptionsColumn>
                <OptionsHeader>
                    <HeaderGrip />
                    <h2>Options</h2>
                    <TinyButton aria-label="Pin options"><Pin /></TinyButton>
                    <TinyButton aria-label="Options menu">
                        <svg width="6" height="3"><path d="M0 0h6L3 3z" fill="#777" /></svg>
                    </TinyButton>
                    <TinyButton aria-label="Close options"><Cross /></TinyButton>
                </OptionsHeader>
                <OptionsForm>
                    <ClassGrid>
                        <WideLabel htmlFor="active-class">Active Class and Subclass:</WideLabel>
                        <SelectFrame>
                            <Select id="active-class"><option>Package Geometry</option></Select>
                            <SelectArrow><Triangle /></SelectArrow>
                        </SelectFrame>
                        <LayerToggle type="button" aria-label="Layer visible" />
                        <SelectFrame $tall>
                            <Swatch />
                            <Select aria-label="Subclass"><option>Place_Bound_Top</option></Select>
                            <SelectArrow><Triangle /></SelectArrow>
                        </SelectFrame>
                    </ClassGrid>
                    <LineFontRow>
                        <label htmlFor="line-font">Line font:</label>
                        <SelectFrame $width={71}>
                            <Select id="line-font"><option>Solid</option></Select>
                            <SelectArrow><Triangle /></SelectArrow>
                        </SelectFrame>
                    </LineFontRow>
                    <RectangleSet>
                        <legend>Rectangle Creation</legend>
                        <RadioLabel>
                            <Radio type="radio" name="mode" checked={mode === "draw"} onChange={() => setMode("draw")} />
                            Draw Rectangle
                        </RadioLabel>
                        <RadioLabel>
                            <Radio type="radio" name="mode" checked={mode === "place"} onChange={() => setMode("place")} />
                            Place Rectangle
                        </RadioLabel>
                        <SizeRow>
                            <label htmlFor="rect-width">Width:</label>
                            <SizeInput id="rect-width" defaultValue="3.50" disabled={mode === "draw"} />
                        </SizeRow>
                        <SizeRow>
                            <label htmlFor="rect-height">Height:</label>
                            <SizeInput id="rect-height" defaultValue="2.00" disabled={mode === "draw"} />
                        </SizeRow>
                    </RectangleSet>
                </OptionsForm>
            </OptionsColumn>
            <DockTabs>
                <DockTab>Visibility</DockTab>
                <DockTab>Find</DockTab>
            </DockTabs>
        </OptionsPane>
    );
};

const App = () => {
    return (
        <>
            <GlobalStyle />
            <Gradients />
            <Desktop>
                <LeftStrip />
                <Window>
                    <TitleBar>
                        <svg width="19" height="18" viewBox="0 0 19 18" fill="none">
                            <path d="M2 1h5l3 4 6-3 2 2-4 5 4 5-2 2-6-3-5 3-4-1 4-6-4-4z" fill="#38b438" stroke="#104c14" strokeDasharray="3 1" />
                            <path d="M2 7l5 2 8-5 2 1-6 5 1 4-2 1-3-4-5 1z" fill="#d81c18" stroke="#600c0c" />
                            <path d="M9 8l6 6" stroke="#d81c18" strokeWidth="2" />
                        </svg>
                        <TitleText>{"(Package) Allegro: 0805.dra  Project: F:.../Cadence/Library/Package"}</TitleText>
                        <CaptionButton aria-label="Minimize">
                            <svg width="10" height="10"><path d="M0 5.500h10" stroke="#000" /></svg>
                        </CaptionButton>
                        <CaptionButton aria-label="Maximize">
                            <svg width="10" height="10"><path d="M.5.5h9v9h-9z" fill="none" stroke="#000" /></svg>
                        </CaptionButton>
                        <CaptionButton aria-label="Close">
                            <svg width="10" height="10"><path d="M0 0l10 10M10 0L0 10" stroke="#000" /></svg>
                        </CaptionButton>
                    </TitleBar>
                    <MenuRow>
                        <MenuBar>
                            {menus.map(([label, key]) => (
                                <MenuButton key={label}>
                                    {label.slice(0, key)}<u>{label[key]}</u>{label.slice(key + 1)}
                                </MenuButton>
                            ))}
                        </MenuBar>
                        <Brand>cadence</Brand>
                    </MenuRow>
                    <Toolbar><ToolGroups groups={topGroups} /></Toolbar>
                    <Toolbar $fit><ToolGroups groups={shapeGroups} /></Toolbar>
                    <Main>
                        <SideTools>
                            {sideGroups.map((names) => (
                                <SideGroup key={names[0]}>
                                    <SideGrip />
                                    {names.map((name) => (
                                        <ToolButton key={name} aria-label={name}>{icons[name]}</ToolButton>
                                    ))}
                                </SideGroup>
                            ))}
                        </SideTools>
                        <Center>
                            <DesignCanvas><Layout /></DesignCanvas>
                            <BottomDocks>
                                <Dock $grow>
                                    <DockHandle title="Command" />
                                    <CommandLog>
                                        {[
                                            "last pick:  2.5800  0.9400",
                                            "Command > iy -1.88",
                                            "last pick:  2.5800  -0.9400",
                                            "Command > ix -1.38",
                                            "last pick:  1.2000  -0.9400",
                                            "Command >",
                                        ].join("\n")}
                                    </CommandLog>
                                    <Scrollbar>
                                        <ScrollButton aria-label="Scroll up"><Triangle up /></ScrollButton>
                                        <ScrollThumb />
                                        <ScrollButton aria-label="Scroll down"><Triangle /></ScrollButton>
                                    </Scrollbar>
                                </Dock>
                                <Dock>
                                    <DockHandle title="WorldView" />
                                    <WorldView />
                                </Dock>
                            </BottomDocks>
                        </Center>
                        <OptionsPanel />
                    </Main>
                    <StatusBar>
                        <StatusCell $width={71} $left>add rect</StatusCell>
                        <StatusCell $width={52} $on />
                        <StatusCell $width={131} />
                        <StatusCell $width={121}>Place_Bound_Top</StatusCell>
                        <StatusCell $width={131}>5.1562, -1.5748</StatusCell>
                        <StatusButton>P</StatusButton>
                        <StatusButton>A</StatusButton>
                        <StatusCell />
                        <StatusCell $width={41} />
                        <StatusCell $width={121}>General edit</StatusCell>
                        <StatusCell $width={71}>Off</StatusCell>
                        <StatusCell $width={52} $on>DRC</StatusCell>
                        <StatusCell $width={42}>0</StatusCell>
                        <svg width="16" height="18" stroke="#909090"><path d="M4 17L15 6M8 17l7-7M12 17l3-3" /></svg>
                    </StatusBar>
                </Window>
                <RightStrip />
                <Player>
                    <span>9/00:40:25</span>
                    <svg width="500" height="7" fill="#a8c0dc">
                        <path d="M0 2h9v5H0zM29 1h2v6h-2zM40 1v6h-6zM75 1l12 6H75zM118 1v6l6-6zM127 1h2v6h-2zM150 4l6-3v6h-6zM403 7l6-6 6 6z" />
                        <path d="M172 3h25v4h-25z" fill="#c89820" />
                        <circle cx="198" cy="5" r="4" />
                        <path d="M377 1l6 3-2 3h-6z" />
                        <path d="M428 1h8v6h-8z" fill="#48a878" stroke="#d07050" />
                        <path d="M452 1h2v2h-2zM456 1h7v2h-7zM452 5h2v2h-2zM456 5h7v2h-7z" />
                    </svg>
                </Player>
                <ImeWidget>
                    <ImeSlogan>I Love This Games</ImeSlogan>
                    <ImeBar>
                        <svg width="15" height="30" viewBox="0 0 15 30">
                            <rect width="15" height="30" rx="3" fill="#fff" />
                            <path d="M3 0h5L6 4l-3 6 4 2-2 6 1 5-1 7H3a3 3 0 0 1-3-3V3a3 3 0 0 1 3-3z" fill="#1c2c88" />
                            <path d="M10 0h2a3 3 0 0 1 3 3v24a3 3 0 0 1-3 3h-1l1-9-3-5 4-6-2-5z" fill="#d82430" />
                            <circle cx="9" cy="4" r="2" fill="#fff" />
                            <path d="M2 25h7v3H2z" fill="#fff" />
                            <path d="M3 26h5v1H3z" fill="#1c2c88" />
                        </svg>
                        <ImeKey $gap={14}>英</ImeKey>
                        <ImeKey $gap={10}>
                            <svg width="6" height="14"><path d="M1 1h4v4L2 9l1-4H1z" fill="#2c3008" /></svg>
                        </ImeKey>
                        <ImeKey $gap={20}>繁</ImeKey>
                    </ImeBar>
                    <ImeBall width="60" height="71" viewBox="0 0 60 71">
                        <path d="M11 39c4 3 9 1 10-6 4 6 0 12-6 12-3 0-5-3-4-6z" fill="#0c3c1c" />
                        <circle cx="66" cy="37" r="34" fill="#f8e414" stroke="#6c5c08" />
                        <path d="M40 20c8 2 16 0 20-6M48 8l12 8M42 60c6-3 12-2 18 2" fill="none" stroke="#5c4c08" />
                        <g fontFamily="Liberation Serif" fontStyle="italic" fontWeight="700" fill="#30185c">
                            <text x="22" y="53" fontSize="56" stroke="#d8d0e8">L</text>
                            <text x="36" y="46" fontSize="32" stroke="#f8e880">A</text>
                        </g>
                    </ImeBall>
                </ImeWidget>
            </Desktop>
        </>
    );
};

export default App;
